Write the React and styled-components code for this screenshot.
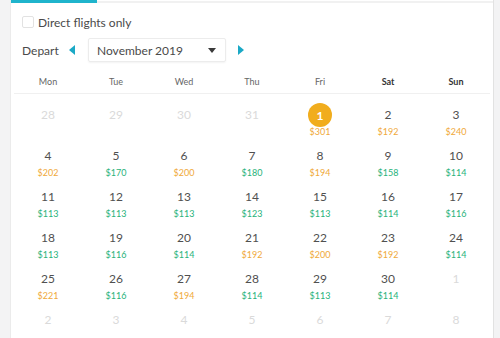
import styled, { createGlobalStyle } from 'styled-components';

const GlobalStyle = createGlobalStyle`
  html, body {
    margin: 0;
    padding: 0;
    background: #f3f3f4;
    font-family: Lato, "Liberation Sans", Arial, sans-serif;
    overflow: hidden;
  }
`;

const Page = styled.div`
  height: 338px;
  padding-left: 10px;
`;

const Panel = styled.div`
  box-sizing: border-box;
  width: 484px;
  height: 100%;
  background: #fff;
  border-left: 1px solid #ebebeb;
  border-right: 1px solid #e2e2e2;
  display: flex;
  flex-direction: column;
`;

const TabBar = styled.div`
  display: flex;
  align-items: flex-end;
  height: 6px;
`;

const ActiveTab = styled.div`
  width: 86px;
  height: 3px;
  background: #1fb4cc;
`;

const TabRest = styled.div`
  flex: 1;
  height: 2px;
  background: #f1f1f1;
`;

const Filters = styled.div`
  padding: 0 11px;
  display: flex;
  flex-direction: column;
`;

const CheckRow = styled.label`
  display: flex;
  align-items: center;
  gap: 4px;
  height: 20px;
  margin-top: 9px;
  font-size: 12px;
  color: #4a4a4a;
`;

const CheckBox = styled.span`
  box-sizing: border-box;
  width: 12px;
  height: 12px;
  border: 1px solid #e2e2e2;
  border-radius: 2px;
  background: #fff;
`;

const DepartRow = styled.div`
  display: flex;
  align-items: center;
  height: 24px;
  margin-top: 6px;
`;

const DepartLabel = styled.span`
  font-size: 12px;
  color: #4a4a4a;
  width: 47px;
`;

const Arrow = styled.span`
  width: 0;
  height: 0;
  border-top: 5px solid transparent;
  border-bottom: 5px solid transparent;
  ${(p) => (p.$dir === 'left' ? 'border-right: 6px solid #1ba9c6;' : 'border-left: 6px solid #1ba9c6;')}
`;

const Select = styled.div`
  box-sizing: border-box;
  width: 138px;
  height: 24px;
  margin: 0 12px 0 13px;
  padding: 0 9px 0 8px;
  border: 1px solid #ececec;
  border-radius: 2px;
  box-shadow: 0 1px 2px rgba(0, 0, 0, 0.05);
  display: flex;
  align-items: center;
  justify-content: space-between;
  font-size: 12px;
  color: #4a4a4a;
`;

const Caret = styled.span`
  width: 0;
  height: 0;
  border-left: 4px solid transparent;
  border-right: 4px solid transparent;
  border-top: 5px solid #3a3a3a;
`;

const Calendar = styled.div`
  padding: 0 3px;
  margin-top: 7px;
`;

const WeekHeader = styled.div`
  display: grid;
  grid-template-columns: repeat(7, 68px);
  height: 24px;
  border-bottom: 1px solid #f0f0f0;
`;

const WeekDay = styled.div`
  display: flex;
  align-items: center;
  justify-content: center;
  font-size: 9px;
  color: ${(p) => (p.$weekend ? '#333' : '#666')};
  font-weight: ${(p) => (p.$weekend ? 700 : 400)};
`;

const Days = styled.div`
  display: grid;
  grid-template-columns: repeat(7, 68px);
  grid-auto-rows: 41px;
  padding-top: 7px;
`;

const DayCell = styled.div`
  display: flex;
  flex-direction: column;
  align-items: center;
  padding-top: 4px;
`;

const DayNumber = styled.div`
  height: 20px;
  line-height: 20px;
  font-size: 12px;
  color: ${(p) => (p.$muted ? '#dadada' : '#505050')};
`;

const SelectedDay = styled.div`
  width: 24px;
  height: 24px;
  margin: -2px 0;
  border-radius: 50%;
  background: #f1ad1d;
  color: #fff;
  font-size: 12px;
  font-weight: 700;
  display: flex;
  align-items: center;
  justify-content: center;
`;

const Price = styled.div`
  height: 14px;
  line-height: 14px;
  font-size: 9px;
  color: ${(p) => (p.$cheap ? '#27b27a' : '#f0a93a')};
`;

const weekdays = ['Mon', 'Tue', 'Wed', 'Thu', 'Fri', 'Sat', 'Sun'];

// g = cheap (green), o = pricier (orange)
const days = [
  { n: 28, muted: true }, { n: 29, muted: true }, { n: 30, muted: true }, { n: 31, muted: true },
  { n: 1, p: 301, c: 'o', selected: true }, { n: 2, p: 192, c: 'o' }, { n: 3, p: 240, c: 'o' },
  { n: 4, p: 202, c: 'o' }, { n: 5, p: 170, c: 'g' }, { n: 6, p: 200, c: 'o' }, { n: 7, p: 180, c: 'g' },
  { n: 8, p: 194, c: 'o' }, { n: 9, p: 158, c: 'g' }, { n: 10, p: 114, c: 'g' },
  { n: 11, p: 113, c: 'g' }, { n: 12, p: 113, c: 'g' }, { n: 13, p: 113, c: 'g' }, { n: 14, p: 123, c: 'g' },
  { n: 15, p: 113, c: 'g' }, { n: 16, p: 114, c: 'g' }, { n: 17, p: 116, c: 'g' },
  { n: 18, p: 113, c: 'g' }, { n: 19, p: 116, c: 'g' }, { n: 20, p: 114, c: 'g' }, { n: 21, p: 192, c: 'o' },
  { n: 22, p: 200, c: 'o' }, { n: 23, p: 192, c: 'o' }, { n: 24, p: 114, c: 'g' },
  { n: 25, p: 221, c: 'o' }, { n: 26, p: 116, c: 'g' }, { n: 27, p: 194, c: 'o' }, { n: 28, p: 114, c: 'g' },
  { n: 29, p: 113, c: 'g' }, { n: 30, p: 114, c: 'g' }, { n: 1, muted: true },
  { n: 2, muted: true }, { n: 3, muted: true }, { n: 4, muted: true }, { n: 5, muted: true },
  { n: 6, muted: true }, { n: 7, muted: true }, { n: 8, muted: true },
];

const App = () => (
  <Page>
    <GlobalStyle />
    <Panel>
      <TabBar>
        <ActiveTab />
        <TabRest />
      </TabBar>

      <Filters>
        <CheckRow>
          <CheckBox />
          Direct flights only
        </CheckRow>
        <DepartRow>
          <DepartLabel>Depart</DepartLabel>
          <Arrow $dir="left" />
          <Select>
            <span>November 2019</span>
            <Caret />
          </Select>
          <Arrow $dir="right" />
        </DepartRow>
      </Filters>

      <Calendar>
        <WeekHeader>
          {weekdays.map((d, i) => (
            <WeekDay key={d} $weekend={i > 4}>{d}</WeekDay>
          ))}
        </WeekHeader>
        <Days>
          {days.map((d, i) => (
            <DayCell key={i}>
              {d.selected ? (
                <SelectedDay>{d.n}</SelectedDay>
              ) : (
                <DayNumber $muted={d.muted}>{d.n}</DayNumber>
              )}
              {d.p && <Price $cheap={d.c === 'g'}>${d.p}</Price>}
            </DayCell>
          ))}
        </Days>
      </Calendar>
    </Panel>
  </Page>
);

export default App;
